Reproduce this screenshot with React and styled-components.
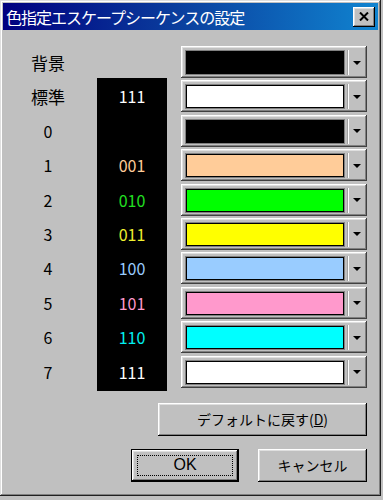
import React from "react";
import styled, { createGlobalStyle } from "styled-components";

const GlobalStyle = createGlobalStyle`
  body {
    margin: 0;
    background: #c0c0c0;
    font-family: "Liberation Sans", "Noto Sans CJK JP", sans-serif;
  }
`;

// window frame
const Window = styled.div`
  width: 381px;
  height: 496px;
  box-sizing: border-box;
  padding: 3px;
  background: #c0c0c0;
  display: flex;
  flex-direction: column;
  box-shadow: inset -1px -1px #202020, inset 1px 1px #dfdfdf,
    inset -2px -2px #808080, inset 2px 2px #ffffff;
`;

const TitleBar = styled.div`
  height: 27px;
  display: flex;
  align-items: center;
  justify-content: space-between;
  padding: 0 3px 0 3px;
  background: linear-gradient(90deg, #000080 0%, #0a3c9c 45%, #1084d0 100%);
  color: #fff;
`;

const Title = styled.span`
  font-family: "Noto Sans CJK JP", sans-serif;
  font-size: 16px;
  letter-spacing: -1px;
  line-height: 1;
`;

const CloseButton = styled.div`
  width: 22px;
  height: 20px;
  box-sizing: border-box;
  background: #c0c0c0;
  display: flex;
  align-items: center;
  justify-content: center;
  box-shadow: inset -1px -1px #000, inset 1px 1px #fff,
    inset -2px -2px #808080, inset 2px 2px #dfdfdf;
`;

const Body = styled.div`
  flex: 1;
  padding: 16px 11px 11px 0;
  display: flex;
  flex-direction: column;
`;

const Grid = styled.div`
  display: grid;
  grid-template-columns: 94px 70px 1fr;
  grid-auto-rows: 32px;
  row-gap: 2.4px;
`;

const Label = styled.div`
  grid-column: 1;
  grid-row: ${(p) => p.$row};
  padding-right: 4px;
  display: flex;
  align-items: center;
  justify-content: center;
  font-family: "Noto Sans CJK JP", sans-serif;
  font-size: ${(p) => (p.$digit ? "16px" : "17px")};
  color: #000;
`;

const Panel = styled.div`
  grid-column: 2;
  grid-row: 2 / 11;
  margin: -2px 0 -3px;
  background: #000;
`;

const Code = styled.div`
  grid-column: 2;
  grid-row: ${(p) => p.$row};
  z-index: 1;
  display: flex;
  align-items: center;
  justify-content: center;
  font-family: "Noto Sans CJK JP", sans-serif;
  font-size: 16px;
  color: ${(p) => p.$color};
`;

const Combo = styled.div`
  grid-column: 3;
  grid-row: ${(p) => p.$row};
  margin-left: 14px;
  width: 186px;
  box-sizing: border-box;
  padding: 4px 2px 3px 4px;
  display: flex;
  background: #c0c0c0;
  box-shadow: inset -1px -1px #404040, inset 1px 1px #ffffff,
    inset -2px -2px #808080, inset 2px 2px #dfdfdf;
`;

const Swatch = styled.div`
  flex: 1;
  background: ${(p) => p.$color};
  border: 1px solid #808080;
  box-shadow: inset 1px 1px #000, inset -1px -1px #000;
`;

const DropButton = styled.div`
  width: 16px;
  margin-left: 3px;
  border-left: 1px solid #ffffff;
  box-shadow: -1px 0 #a0a0a0;
  display: flex;
  align-items: center;
  justify-content: center;
`;

const Arrow = styled.div`
  width: 0;
  height: 0;
  border-left: 4px solid transparent;
  border-right: 4px solid transparent;
  border-top: 4px solid #000;
`;

const ButtonRow = styled.div`
  display: flex;
  justify-content: flex-end;
  gap: 19px;
  margin-top: ${(p) => p.$top}px;
`;

const Button = styled.div`
  width: ${(p) => p.$w}px;
  height: 33px;
  box-sizing: border-box;
  display: flex;
  align-items: center;
  justify-content: center;
  background: #c0c0c0;
  font-family: "Noto Sans CJK JP", sans-serif;
  font-size: 14px;
  color: #000;
  box-shadow: inset -1px -1px #000, inset 1px 1px #fff,
    inset -2px -2px #808080, inset 2px 2px #dfdfdf;
  ${(p) => p.$default && `border: 1px solid #000;`}
`;

const Focus = styled.div`
  width: calc(100% - 10px);
  height: calc(100% - 10px);
  box-sizing: border-box;
  border: 1px dotted #000;
  display: flex;
  align-items: center;
  justify-content: center;
  font-family: "Liberation Sans", sans-serif;
  font-size: 16px;
`;

const rows = [
  { label: "背景", swatch: "#000000" },
  { label: "標準", code: "111", color: "#ffffff", swatch: "#ffffff" },
  { label: "0", digit: true, swatch: "#000000" },
  { label: "1", digit: true, code: "001", color: "#ffcc99", swatch: "#ffcc99" },
  { label: "2", digit: true, code: "010", color: "#22e022", swatch: "#00ff00" },
  { label: "3", digit: true, code: "011", color: "#f0f030", swatch: "#ffff00" },
  { label: "4", digit: true, code: "100", color: "#99ccff", swatch: "#99ccff" },
  { label: "5", digit: true, code: "101", color: "#ff99cc", swatch: "#ff99cc" },
  { label: "6", digit: true, code: "110", color: "#00f0f0", swatch: "#00ffff" },
  { label: "7", digit: true, code: "111", color: "#ffffff", swatch: "#ffffff" },
];

export default function App() {
  return (
    <>
      <GlobalStyle />
      <Window>
        <TitleBar>
          <Title>色指定エスケープシーケンスの設定</Title>
          <CloseButton>
            <svg width="10" height="9" viewBox="0 0 10 9">
              <path d="M1 0.5 L9 8.5 M9 0.5 L1 8.5" stroke="#000" strokeWidth="2" />
            </svg>
          </CloseButton>
        </TitleBar>
        <Body>
          <Grid>
            <Panel />
            {rows.map((r, i) => (
              <React.Fragment key={i}>
                <Label $row={i + 1} $digit={r.digit}>
                  {r.label}
                </Label>
                {r.code && (
                  <Code $row={i + 1} $color={r.color}>
                    {r.code}
                  </Code>
                )}
                <Combo $row={i + 1}>
                  <Swatch $color={r.swatch} />
                  <DropButton>
                    <Arrow />
                  </DropButton>
                </Combo>
              </React.Fragment>
            ))}
          </Grid>
          <ButtonRow $top={15}>
            <Button $w={209}>
              デフォルトに戻す(<u>D</u>)
            </Button>
          </ButtonRow>
          <ButtonRow $top={13}>
            <Button $w={108} $default>
              <Focus>OK</Focus>
            </Button>
            <Button $w={109}>キャンセル</Button>
          </ButtonRow>
        </Body>
      </Window>
    </>
  );
}
